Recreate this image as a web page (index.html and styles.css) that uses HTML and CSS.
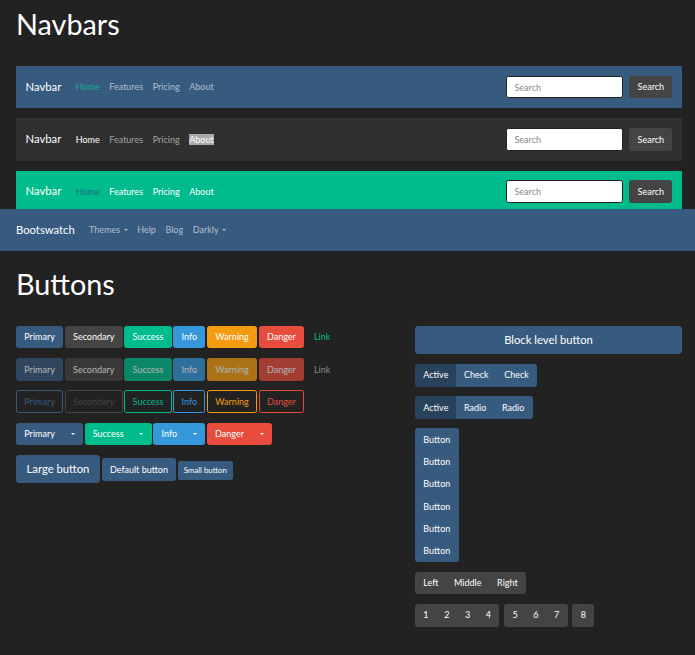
FILE: index.html
```html
<!DOCTYPE html>
<html lang="en">
<head>
<meta charset="utf-8">
<title>Darkly</title>
<link rel="stylesheet" href="styles.css">
</head>
<body>
<div class="page">
  <h1 class="section-title">Navbars</h1>

  <nav class="navbar navbar-primary">
    <span class="brand">Navbar</span>
    <ul class="nav">
      <li><a class="nav-link active">Home</a></li>
      <li><a class="nav-link">Features</a></li>
      <li><a class="nav-link">Pricing</a></li>
      <li><a class="nav-link">About</a></li>
    </ul>
    <form class="search">
      <input class="search-input" type="text" placeholder="Search">
      <button class="btn btn-secondary" type="button">Search</button>
    </form>
  </nav>

  <nav class="navbar navbar-darkbg">
    <span class="brand">Navbar</span>
    <ul class="nav">
      <li><a class="nav-link active">Home</a></li>
      <li><a class="nav-link">Features</a></li>
      <li><a class="nav-link">Pricing</a></li>
      <li><a class="nav-link"><span class="selected">About</span></a></li>
    </ul>
    <form class="search">
      <input class="search-input" type="text" placeholder="Search">
      <button class="btn btn-secondary" type="button">Search</button>
    </form>
  </nav>

  <nav class="navbar navbar-success">
    <span class="brand">Navbar</span>
    <ul class="nav">
      <li><a class="nav-link active">Home</a></li>
      <li><a class="nav-link">Features</a></li>
      <li><a class="nav-link">Pricing</a></li>
      <li><a class="nav-link">About</a></li>
    </ul>
    <form class="search">
      <input class="search-input" type="text" placeholder="Search">
      <button class="btn btn-secondary" type="button">Search</button>
    </form>
  </nav>

  <h1 class="section-title buttons-title">Buttons</h1>

  <div class="btn-grid">
    <div class="col col-left">
      <div class="btn-row">
        <button class="btn btn-primary">Primary</button>
        <button class="btn btn-secondary">Secondary</button>
        <button class="btn btn-success">Success</button>
        <button class="btn btn-info">Info</button>
        <button class="btn btn-warning">Warning</button>
        <button class="btn btn-danger">Danger</button>
        <button class="btn btn-link">Link</button>
      </div>
      <div class="btn-row disabled">
        <button class="btn btn-primary">Primary</button>
        <button class="btn btn-secondary">Secondary</button>
        <button class="btn btn-success">Success</button>
        <button class="btn btn-info">Info</button>
        <button class="btn btn-warning">Warning</button>
        <button class="btn btn-danger">Danger</button>
        <button class="btn btn-link btn-link-disabled">Link</button>
      </div>
      <div class="btn-row">
        <button class="btn btn-outline-primary">Primary</button>
        <button class="btn btn-outline-secondary">Secondary</button>
        <button class="btn btn-outline-success">Success</button>
        <button class="btn btn-outline-info">Info</button>
        <button class="btn btn-outline-warning">Warning</button>
        <button class="btn btn-outline-danger">Danger</button>
      </div>
      <div class="btn-row">
        <div class="btn-group">
          <button class="btn btn-primary">Primary</button>
          <button class="btn btn-primary toggle-split"><span class="caret"></span></button>
        </div>
        <div class="btn-group">
          <button class="btn btn-success">Success</button>
          <button class="btn btn-success toggle-split"><span class="caret"></span></button>
        </div>
        <div class="btn-group">
          <button class="btn btn-info">Info</button>
          <button class="btn btn-info toggle-split"><span class="caret"></span></button>
        </div>
        <div class="btn-group">
          <button class="btn btn-danger">Danger</button>
          <button class="btn btn-danger toggle-split"><span class="caret"></span></button>
        </div>
      </div>
      <div class="btn-row">
        <button class="btn btn-primary btn-lg">Large button</button>
        <button class="btn btn-primary">Default button</button>
        <button class="btn btn-primary btn-sm">Small button</button>
      </div>
    </div>

    <div class="col col-right">
      <button class="btn btn-primary btn-lg btn-block">Block level button</button>

      <div class="btn-group">
        <button class="btn btn-primary is-active">Active</button>
        <button class="btn btn-primary">Check</button>
        <button class="btn btn-primary">Check</button>
      </div>

      <div class="btn-group">
        <button class="btn btn-primary is-active">Active</button>
        <button class="btn btn-primary">Radio</button>
        <button class="btn btn-primary">Radio</button>
      </div>

      <div class="btn-group-vertical">
        <button class="btn btn-primary">Button</button>
        <button class="btn btn-primary">Button</button>
        <button class="btn btn-primary">Button</button>
        <button class="btn btn-primary">Button</button>
        <button class="btn btn-primary">Button</button>
        <button class="btn btn-primary">Button</button>
      </div>

      <div class="btn-group">
        <button class="btn btn-secondary">Left</button>
        <button class="btn btn-secondary">Middle</button>
        <button class="btn btn-secondary">Right</button>
      </div>

      <div class="btn-toolbar">
        <div class="btn-group">
          <button class="btn btn-secondary">1</button>
          <button class="btn btn-secondary">2</button>
          <button class="btn btn-secondary">3</button>
          <button class="btn btn-secondary">4</button>
        </div>
        <div class="btn-group">
          <button class="btn btn-secondary">5</button>
          <button class="btn btn-secondary">6</button>
          <button class="btn btn-secondary">7</button>
        </div>
        <div class="btn-group">
          <button class="btn btn-secondary">8</button>
        </div>
      </div>
    </div>
  </div>
</div>

<header class="topbar">
  <span class="brand">Bootswatch</span>
  <ul class="nav">
    <li><a class="nav-link">Themes<span class="caret caret-nav"></span></a></li>
    <li><a class="nav-link">Help</a></li>
    <li><a class="nav-link">Blog</a></li>
    <li><a class="nav-link">Darkly<span class="caret caret-nav"></span></a></li>
  </ul>
</header>
</body>
</html>
```

FILE: styles.css
```css
* {
  box-sizing: border-box;
}

html,
body {
  margin: 0;
  padding: 0;
}

body {
  background: #222222;
  color: #ffffff;
  font-family: Lato, "Liberation Sans", sans-serif;
  font-size: 9px;
  line-height: 1.5;
}

.page {
  padding: 7px 13px 30px 16px;
}

.section-title {
  margin: 0 0 24.4px;
  font-size: 28.8px;
  font-weight: 400;
  line-height: 1.2;
  color: #ffffff;
}

.buttons-title {
  margin-top: 54px;
}

/* ---------- navbars ---------- */

.navbar {
  display: flex;
  align-items: center;
  padding: 9.6px;
  margin-bottom: 10px;
}

.navbar-success {
  margin-bottom: 0;
}

.brand {
  font-size: 11.25px;
  line-height: 1.5;
  margin-right: 9.6px;
  color: #ffffff;
  white-space: nowrap;
}

.nav {
  display: flex;
  list-style: none;
  margin: 0;
  padding: 0;
}

.nav-link {
  display: block;
  padding: 4.8px 4.8px;
  font-size: 9px;
  line-height: 1.5;
  white-space: nowrap;
}

.navbar-primary {
  background: #375a7f;
}

.navbar-primary .nav-link {
  color: rgba(255, 255, 255, 0.6);
}

.navbar-primary .nav-link.active {
  color: #12b08e;
}

.navbar-darkbg {
  background: #303030;
}

.navbar-darkbg .nav-link {
  color: rgba(255, 255, 255, 0.55);
}

.navbar-darkbg .nav-link.active {
  color: #ffffff;
}

.selected {
  background: #a9a9a9;
  color: #ffffff;
}

.navbar-success {
  background: #00bc8c;
}

.navbar-success .nav-link {
  color: #ffffff;
}

.navbar-success .nav-link.active {
  color: #1f6d7c;
}

.search {
  display: flex;
  align-items: center;
  margin: 0 0 0 auto;
}

.search-input {
  width: 117px;
  height: 22.7px;
  margin: 0 6px 0 0;
  padding: 3.6px 7.2px;
  font-family: inherit;
  font-size: 9px;
  line-height: 1.5;
  color: #444444;
  background: #ffffff;
  border: 1px solid #222222;
  border-radius: 2.4px;
  outline: none;
}

.search-input::placeholder {
  color: #888888;
}

/* ---------- top bar (overlays the last navbar) ---------- */

.topbar {
  position: absolute;
  top: 209px;
  left: 0;
  right: 0;
  height: 42px;
  display: flex;
  align-items: center;
  padding: 0 16px;
  background: #375a7f;
}

.topbar .nav-link {
  color: rgba(255, 255, 255, 0.6);
}

/* ---------- buttons ---------- */

.btn {
  display: inline-block;
  margin: 0;
  padding: 3.6px 7.3px;
  font-family: inherit;
  font-size: 9px;
  font-weight: 400;
  line-height: 13.5px;
  color: #ffffff;
  text-align: center;
  white-space: nowrap;
  background: transparent;
  border: 1px solid transparent;
  border-radius: 2.4px;
}

.btn-primary {
  background: #375a7f;
  border-color: #375a7f;
}

.btn-secondary {
  background: #444444;
  border-color: #444444;
}

.btn-success {
  background: #00bc8c;
  border-color: #00bc8c;
}

.btn-info {
  background: #3498db;
  border-color: #3498db;
}

.btn-warning {
  background: #f39c12;
  border-color: #f39c12;
}

.btn-danger {
  background: #e74c3c;
  border-color: #e74c3c;
}

.btn-link {
  color: #00bc8c;
}

.btn-link-disabled {
  color: #888888;
}

.disabled .btn {
  opacity: 0.65;
}

.disabled .btn-link-disabled {
  opacity: 1;
}

.btn-outline-primary {
  color: #375a7f;
  border-color: #375a7f;
}

.btn-outline-secondary {
  color: #444444;
  border-color: #444444;
}

.btn-outline-success {
  color: #00bc8c;
  border-color: #00bc8c;
}

.btn-outline-info {
  color: #3498db;
  border-color: #3498db;
}

.btn-outline-warning {
  color: #f39c12;
  border-color: #f39c12;
}

.btn-outline-danger {
  color: #e74c3c;
  border-color: #e74c3c;
}

.btn-lg {
  padding: 4.8px 9.6px;
  font-size: 11.25px;
  line-height: 16.9px;
  border-radius: 2.9px;
}

.btn-sm {
  padding: 2.4px 4.8px;
  font-size: 7.875px;
  line-height: 11.8px;
  border-radius: 1.9px;
}

.btn-block {
  display: block;
  width: 100%;
  align-self: stretch;
}

.btn-primary.is-active {
  background: #28425c;
  border-color: #28425c;
}

.caret {
  display: inline-block;
  width: 0;
  height: 0;
  border-top: 2.7px solid currentColor;
  border-left: 2.7px solid transparent;
  border-right: 2.7px solid transparent;
  vertical-align: 2.3px;
}

.caret-nav {
  margin-left: 3.5px;
}

.toggle-split {
  padding-left: 7.4px;
  padding-right: 7.4px;
}

/* ---------- layout of the button section ---------- */

.btn-grid {
  display: grid;
  grid-template-columns: 381px 267px;
  column-gap: 18px;
  align-items: start;
}

.col {
  display: flex;
  flex-direction: column;
  align-items: flex-start;
}

.col-right {
  gap: 9.6px;
}

.btn-row {
  display: flex;
  align-items: baseline;
  gap: 1.6px;
  margin-bottom: 9.6px;
}

.btn-group {
  display: inline-flex;
}

.btn-group > .btn:not(:first-child) {
  margin-left: -1px;
  border-top-left-radius: 0;
  border-bottom-left-radius: 0;
}

.btn-group > .btn:not(:last-child) {
  border-top-right-radius: 0;
  border-bottom-right-radius: 0;
}

.btn-group-vertical {
  display: inline-flex;
  flex-direction: column;
}

.btn-group-vertical > .btn:not(:first-child) {
  margin-top: -0.5px;
  border-top-left-radius: 0;
  border-top-right-radius: 0;
}

.btn-group-vertical > .btn:not(:last-child) {
  border-bottom-left-radius: 0;
  border-bottom-right-radius: 0;
}

.btn-toolbar {
  display: flex;
  gap: 4.8px;
}
```
